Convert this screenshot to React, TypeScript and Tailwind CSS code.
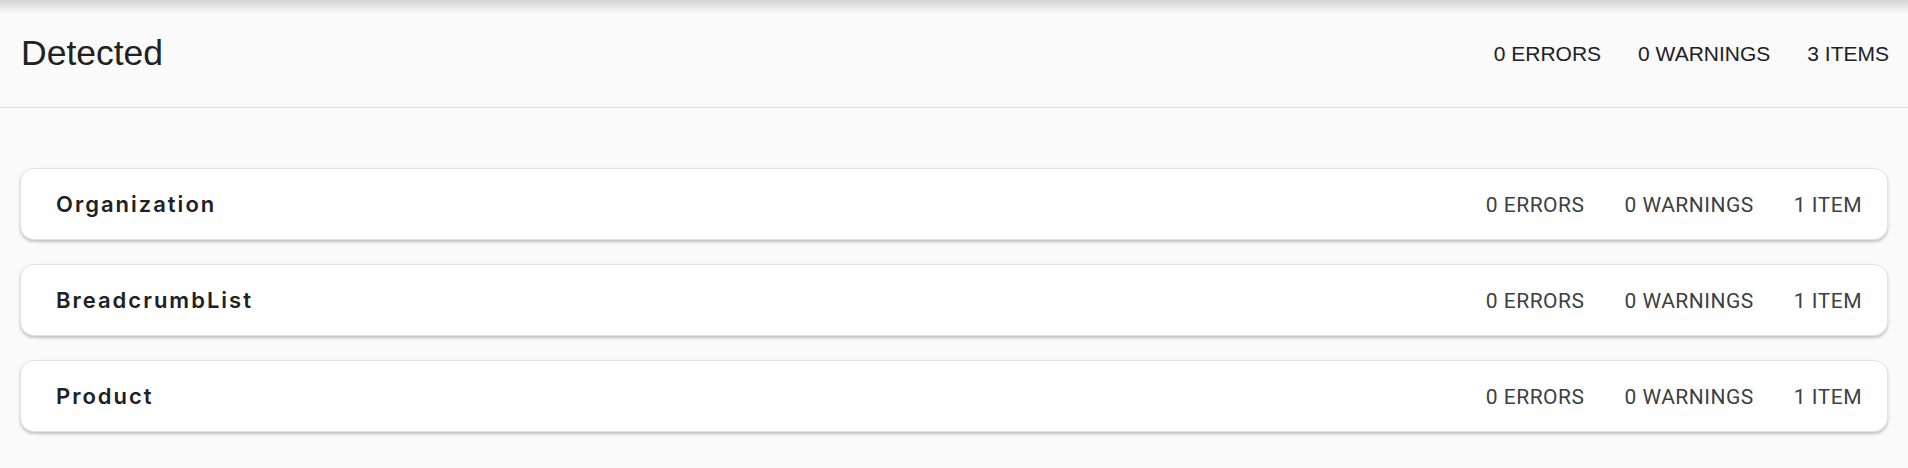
import React from "react";

interface Group {
  name: string;
  errors: number;
  warnings: number;
  items: number;
}

const groups: Group[] = [
  { name: "Organization", errors: 0, warnings: 0, items: 1 },
  { name: "BreadcrumbList", errors: 0, warnings: 0, items: 1 },
  { name: "Product", errors: 0, warnings: 0, items: 1 },
];

const plural = (n: number, word: string) => `${n} ${word}${n === 1 ? "" : "S"}`;

export default function App() {
  return (
    <div className="relative min-h-[468px] bg-[#fafafa]">
      {/* shadow from the toolbar above */}
      <div className="pointer-events-none absolute inset-x-0 top-0 h-[14px] bg-gradient-to-b from-[#d4d4d4] to-[#fafafa]/0" />

      <header className="flex h-[108px] items-center justify-between border-b border-[#dedede] pl-[21px] pr-[19px] font-['Liberation_Sans',Arial,sans-serif] text-[#202124]">
        <h1 className="text-[35.5px] leading-none">Detected</h1>
        <div className="flex items-center gap-[37px] text-[21px]">
          <span>0 ERRORS</span>
          <span>0 WARNINGS</span>
          <span>3 ITEMS</span>
        </div>
      </header>

      <div className="flex flex-col gap-[24px] px-[20px] pt-[60px]">
        {groups.map((g) => (
          <div
            key={g.name}
            className="flex h-[72px] items-center justify-between rounded-[14px] border border-[#e3e3e3] bg-white pl-[35px] pr-[25px] shadow-[0_2px_3px_rgba(0,0,0,0.22)]"
          >
            <span className="pt-[1px] font-['Inter',sans-serif] text-[22px] font-semibold tracking-[2px] text-[#202124]">
              {g.name}
            </span>
            <div className="flex items-center gap-[40px] pt-[3px] font-['Roboto',sans-serif] text-[21px] tracking-[0.5px] text-[#3c4043]">
              <span>{plural(g.errors, "ERROR")}</span>
              <span>{plural(g.warnings, "WARNING")}</span>
              <span>{plural(g.items, "ITEM")}</span>
            </div>
          </div>
        ))}
      </div>
    </div>
  );
}
